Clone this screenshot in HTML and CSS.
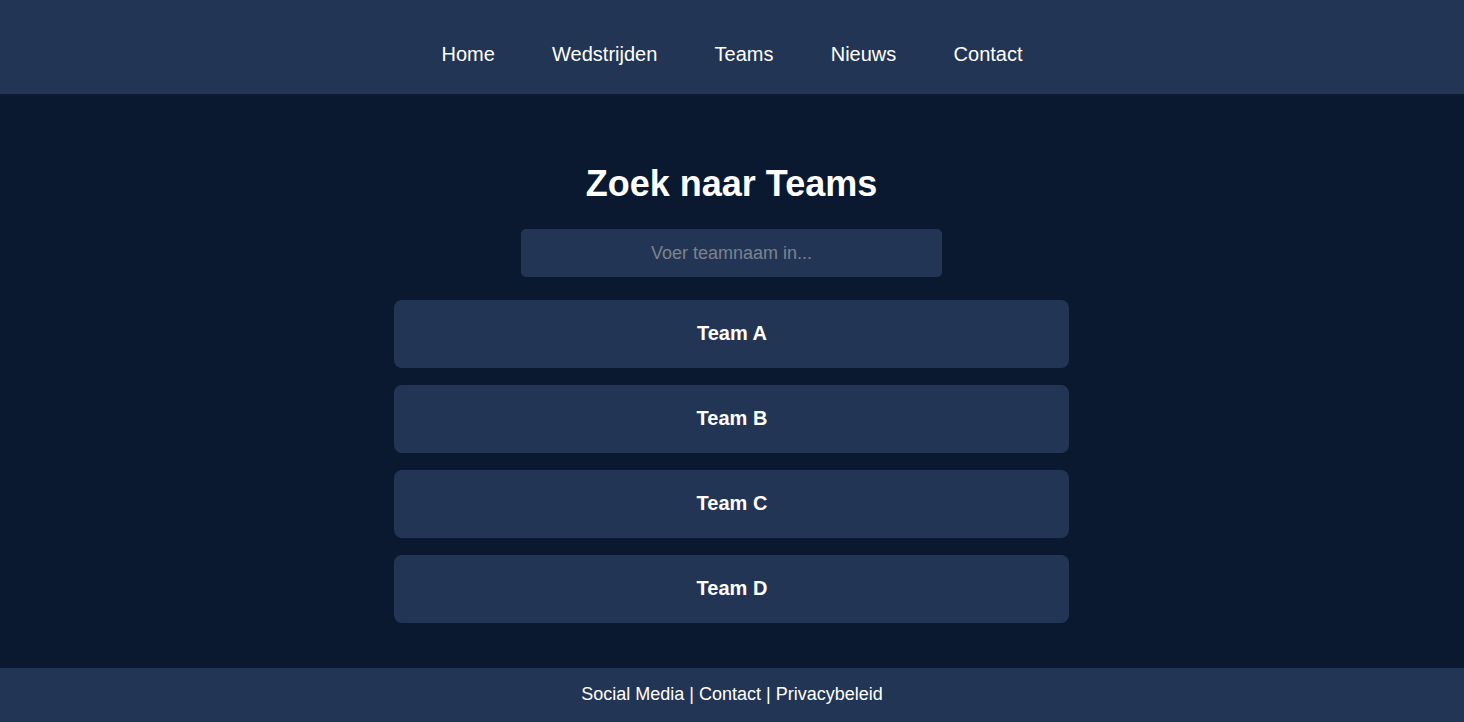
FILE: index.html
```
<!DOCTYPE html>
<html lang="nl">
<head>
<meta charset="utf-8">
<title>Teams</title>
<link rel="stylesheet" href="styles.css">
</head>
<body>
<header class="site-header">
  <nav class="nav">
    <a href="#">Home</a>
    <a href="#">Wedstrijden</a>
    <a href="#">Teams</a>
    <a href="#">Nieuws</a>
    <a href="#">Contact</a>
  </nav>
</header>
<main class="content">
  <h1 class="title">Zoek naar Teams</h1>
  <input class="search" type="text" placeholder="Voer teamnaam in...">
  <ul class="team-list">
    <li class="team-card">Team A</li>
    <li class="team-card">Team B</li>
    <li class="team-card">Team C</li>
    <li class="team-card">Team D</li>
  </ul>
</main>
<footer class="site-footer">Social Media | Contact | Privacybeleid</footer>
</body>
</html>
```
FILE: styles.css
```
* { box-sizing: border-box; }
html, body { margin: 0; padding: 0; }
body {
  background: #0a192f;
  color: #ffffff;
  font-family: "Liberation Sans", Arial, sans-serif;
}
.site-header {
  background: #233554;
  height: 94px;
  padding-top: 43px;
}
.nav {
  display: flex;
  justify-content: center;
  gap: 57.25px;
  font-size: 20px;
  line-height: 23px;
}
.nav a { color: #ffffff; text-decoration: none; }
.content {
  display: flex;
  flex-direction: column;
  align-items: center;
  padding: 69px 1px 45px 0;
}
.title {
  margin: 0;
  font-size: 36px;
  line-height: 41px;
  font-weight: bold;
}
.search {
  margin-top: 25px;
  width: 421px;
  height: 48px;
  border: none;
  border-radius: 5px;
  background: #233554;
  color: #ffffff;
  font-family: inherit;
  font-size: 18px;
  text-align: center;
  outline: none;
}
.search::placeholder { color: #7d838d; }
.team-list {
  list-style: none;
  margin: 23px 0 0;
  padding: 0;
  display: flex;
  flex-direction: column;
  gap: 17px;
  width: 675px;
}
.team-card {
  background: #233554;
  border-radius: 8px;
  height: 68px;
  padding: 0 0 2px 1px;
  display: flex;
  align-items: center;
  justify-content: center;
  font-size: 20px;
  font-weight: bold;
}
.site-footer {
  background: #233554;
  height: 54px;
  padding-bottom: 2px;
  display: flex;
  align-items: center;
  justify-content: center;
  font-size: 18px;
}
```
